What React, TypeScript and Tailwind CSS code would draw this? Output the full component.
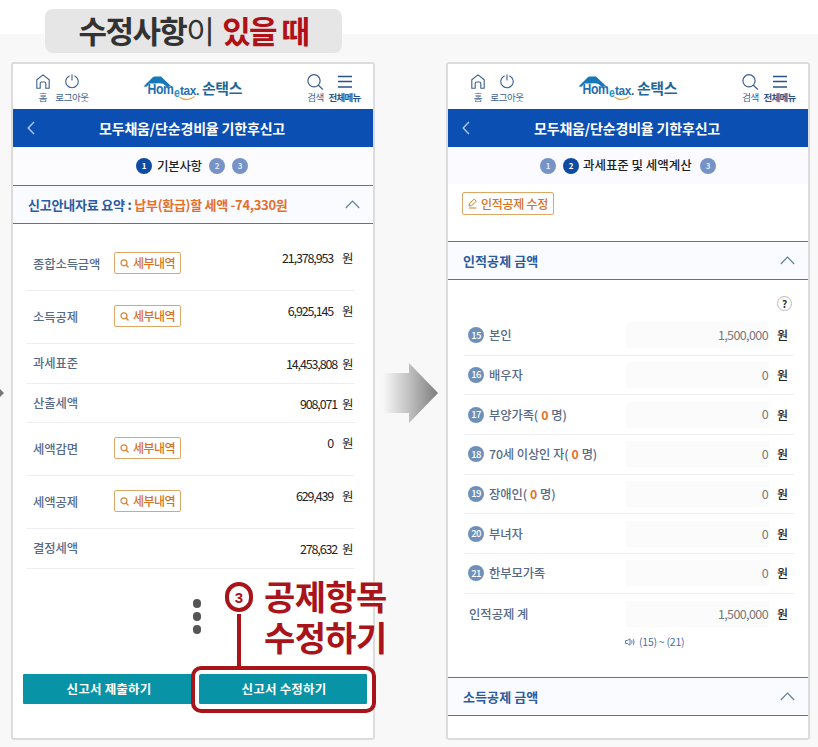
import { ReactNode } from 'react';
import clsx from 'clsx';

interface SummaryRow {
    label: string;
    value: string;
    detail?: boolean;
    height: string;
}

interface DeductionRow {
    no: number;
    label: string;
    count?: boolean;
}

const summaryRows: SummaryRow[] = [
    { label: '종합소득금액', value: '21,378,953', detail: true, height: 'h-[53px]' },
    { label: '소득공제', value: '6,925,145', detail: true, height: 'h-[53px]' },
    { label: '과세표준', value: '14,453,808', height: 'h-[40px]' },
    { label: '산출세액', value: '908,071', height: 'h-[39px]' },
    { label: '세액감면', value: '0', detail: true, height: 'h-[53px]' },
    { label: '세액공제', value: '629,439', detail: true, height: 'h-[53px]' },
    { label: '결정세액', value: '278,632', height: 'h-[40px]' },
];

const deductionRows: DeductionRow[] = [
    { no: 15, label: '본인' },
    { no: 16, label: '배우자' },
    { no: 17, label: '부양가족', count: true },
    { no: 18, label: '70세 이상인 자', count: true },
    { no: 19, label: '장애인', count: true },
    { no: 20, label: '부녀자' },
    { no: 21, label: '한부모가족' },
];

const Logo = () => (
    <svg width="102" height="30" viewBox="0 0 102 30" className="shrink-0">
        <path d="M0.5 12.5 L9.5 3.6 Q10.5 2.6 12 2.6 H18 L28.5 12.5 H23.5 L20 9.8 Q17 9 12.5 9.5 L6.5 9.5 L3.5 12.8 Z" fill="#1678b8" />
        <text x="4.5" y="20" fontSize="14" fontWeight="700" fill="#1f6fb0" textLength="26" lengthAdjust="spacingAndGlyphs" fontFamily="Liberation Sans, sans-serif">Hom</text>
        <text x="31" y="23" fontSize="12" fontWeight="700" fill="#1b96d2" textLength="5.5" lengthAdjust="spacingAndGlyphs" fontFamily="Liberation Sans, sans-serif">e</text>
        <text x="37" y="20.5" fontSize="13.5" fontWeight="700" fill="#1f6fb0" textLength="19" lengthAdjust="spacingAndGlyphs" fontFamily="Liberation Sans, sans-serif">tax.</text>
        <path d="M36.5 23 Q44 28.5 51.5 22.5" fill="none" stroke="#f2a64a" strokeWidth="1.2" />
        <text x="59" y="20" fontSize="15" fontWeight="700" fill="#1f6798" textLength="40" lengthAdjust="spacingAndGlyphs" fontFamily="'Noto Sans CJK KR', sans-serif">손택스</text>
    </svg>
);

const HomeIcon = () => (
    <svg width="14" height="15" viewBox="0 0 14 15" fill="none" stroke="#3d5f8f" strokeWidth="1.1">
        <path d="M0.8 5.8 L7 0.9 L13.2 5.8 V14.2 H9.8 V9.3 Q9.8 8 8.5 8 H5.5 Q4.2 8 4.2 9.3 V14.2 H0.8 Z" strokeLinejoin="round" />
    </svg>
);

const PowerIcon = () => (
    <svg width="14" height="15" viewBox="0 0 14 15" fill="none" stroke="#3d5f8f" strokeWidth="1.1" strokeLinecap="round">
        <path d="M7 0.7 V6 M4.3 2 A6.2 6.2 0 1 0 9.7 2" />
    </svg>
);

const SearchIcon = () => (
    <svg width="17" height="16" viewBox="0 0 17 16" fill="none" stroke="#3d5f8f" strokeWidth="1.2" strokeLinecap="round">
        <circle cx="7" cy="6.8" r="6.1" />
        <path d="M11.4 11.3 L15.6 15.2" />
    </svg>
);

const MenuIcon = () => (
    <svg width="14" height="13" viewBox="0 0 14 13" fill="none" stroke="#2b5288" strokeWidth="1.3">
        <path d="M0 1.5 H14 M0 6.5 H14 M0 12 H14" />
    </svg>
);

const ChevronUp = () => (
    <svg width="15" height="9" viewBox="0 0 15 9" fill="none" stroke="#5c7f95" strokeWidth="1.1">
        <path d="M0.8 8 L7.5 1 L14.2 8" />
    </svg>
);

const AppHeader = () => (
    <>
        <div className="flex h-[45px] shrink-0 text-[9.5px] leading-[12px] tracking-[-0.4px] text-[#3d5f8f]">
            <div className="flex w-[130px] gap-[4px] pl-[23px] pt-[10px]">
                <div className="flex w-[14px] flex-col items-center gap-[2px] whitespace-nowrap">
                    <HomeIcon />
                    <span>홈</span>
                </div>
                <div className="flex w-[36px] flex-col items-center gap-[2px] whitespace-nowrap">
                    <PowerIcon />
                    <span>로그아웃</span>
                </div>
            </div>
            <div className="w-[164px] pt-[10px]">
                <Logo />
            </div>
            <div className="flex gap-[4px] pt-[10px]">
                <div className="flex w-[17px] flex-col items-center gap-px whitespace-nowrap">
                    <SearchIcon />
                    <span>검색</span>
                </div>
                <div className="flex w-[33px] flex-col items-center gap-[3px] whitespace-nowrap pt-px font-bold tracking-[-0.8px] text-[#2b5288]">
                    <MenuIcon />
                    <span>전체메뉴</span>
                </div>
            </div>
        </div>
        <div className="flex h-[38px] shrink-0 items-center bg-[#0b4fb3] text-white">
            <svg width="8" height="14" viewBox="0 0 8 14" fill="none" stroke="#a9c6f2" strokeWidth="1.5" className="ml-[14px]">
                <path d="M7 1 L1.2 7 L7 13" />
            </svg>
            <h1 className="ml-[64px] whitespace-nowrap text-[14px] font-bold leading-none tracking-[-0.18px]">모두채움/단순경비율 기한후신고</h1>
        </div>
    </>
);

const Step = ({ no, active }: { no: number; active?: boolean }) => (
    <span className={clsx(
        'flex h-[16px] w-[16px] items-center justify-center rounded-full text-[8px] font-bold leading-none',
        active ? 'bg-[#0f4ba3] text-white' : 'bg-[#7793c6] text-[#dce8fa]'
    )}>
        {no}
    </span>
);

const SectionTitle = ({ children }: { children: ReactNode }) => (
    <div className="flex h-[39px] shrink-0 items-center justify-between border-y border-[#4b7ba5] bg-[#fafbff] pl-[15px] pr-[13px]">
        <h2 className="whitespace-nowrap text-[13px] font-bold leading-none tracking-[0.1px] text-[#2a5ba0]">{children}</h2>
        <ChevronUp />
    </div>
);

const DetailButton = () => (
    <button className="flex h-[22px] w-[67px] items-center justify-center gap-[4px] whitespace-nowrap rounded-[2px] border border-[#dfa765] text-[12px] font-medium leading-none tracking-[-0.6px] text-[#d6721f]">
        <svg width="9" height="9" viewBox="0 0 9 9" fill="none" stroke="#d6812f" strokeWidth="1.2">
            <circle cx="4" cy="3.8" r="3" />
            <path d="M6.1 6 L8.5 8.5" />
        </svg>
        세부내역
    </button>
);

const SummaryScreen = () => (
    <div className="flex h-[678px] w-[364px] flex-col rounded-[3px] border-2 border-[#dcdcdc] bg-white">
        <AppHeader />
        <div className="flex h-[38px] shrink-0 items-center bg-[#fcfcff] pl-[123px]">
            <Step no={1} active />
            <span className="ml-[5px] mr-[7px] w-[45px] whitespace-nowrap text-[12.5px] font-medium leading-none tracking-[-0.3px] text-[#222]">기본사항</span>
            <Step no={2} />
            <span className="w-[7px]" />
            <Step no={3} />
        </div>
        <SectionTitle>
            <span className="tracking-[-0.2px]">신고안내자료 요약 : </span>
            <span className="tracking-[-0.3px] text-[#e4702c]">납부(환급)할 세액 -74,330원</span>
        </SectionTitle>
        <div className="ml-[13px] mr-[18px] mt-[14px]">
            {summaryRows.map((row) => (
                <div key={row.label} className={clsx('flex border-b border-[#eeeeee] pl-[7px] pr-[3px] leading-none', row.height)}>
                    <span className={clsx('w-[81px] whitespace-nowrap text-[12.3px] font-medium tracking-[-0.1px] text-[#566a88]', row.detail ? 'pt-[20px]' : 'pt-[13px]')}>{row.label}</span>
                    <div className="w-[68px] pt-[14px]">{row.detail && <DetailButton />}</div>
                    <div className={clsx('flex flex-1 justify-end pt-[14px] text-[12.5px] text-[#222]', row.detail ? 'gap-[9px]' : 'gap-[5px]')}>
                        <span className="tracking-[-1.15px]">{row.value}</span>
                        <span className="w-[10px] whitespace-nowrap">원</span>
                    </div>
                </div>
            ))}
        </div>
        <div className="ml-[180px] mt-[30px] flex flex-col gap-[4px]">
            <span className="h-[9px] w-[8px] rounded-full bg-[#555]" />
            <span className="h-[9px] w-[8px] rounded-full bg-[#555]" />
            <span className="h-[9px] w-[8px] rounded-full bg-[#555]" />
        </div>
        <div className="mb-[34px] ml-[10px] mt-auto flex gap-[6px] text-[12.5px] font-bold leading-none tracking-[0.2px] text-white">
            <button className="h-[30px] w-[170px] rounded-[1px] bg-[#0993a6] pl-[2px]">신고서 제출하기</button>
            <button className="h-[30px] w-[168px] rounded-[1px] bg-[#0993a6] pl-[2px]">신고서 수정하기</button>
        </div>
    </div>
);

const AmountField = ({ value }: { value: string }) => (
    <div className="flex items-center leading-none">
        <span className="flex h-[26px] w-[143px] items-center justify-end bg-[#fbfbfb] pr-px text-[12.5px] tracking-[-0.6px] text-[#777]">{value}</span>
        <span className="ml-[8px] w-[11px] whitespace-nowrap text-[12px] font-medium text-[#222]">원</span>
    </div>
);

const DeductionScreen = () => (
    <div className="flex h-[678px] w-[364px] flex-col rounded-[3px] border-2 border-[#dcdcdc] bg-white">
        <AppHeader />
        <div className="flex h-[37px] shrink-0 items-center bg-[#fafaff] pl-[92px]">
            <Step no={1} />
            <span className="w-[7px]" />
            <Step no={2} active />
            <span className="ml-[4px] mr-[8px] w-[109px] whitespace-nowrap text-[12.5px] font-medium leading-none tracking-[-0.05px] text-[#222]">과세표준 및 세액계산</span>
            <Step no={3} />
        </div>
        <button className="ml-[14px] mt-[8px] flex h-[23px] w-[92px] shrink-0 items-center justify-center gap-[3px] whitespace-nowrap rounded-[2px] border border-[#dfa765] text-[12px] font-medium leading-none tracking-[-0.3px] text-[#d6721f]">
            <svg width="10" height="11" viewBox="0 0 10 11" fill="none" stroke="#d6812f" strokeWidth="1">
                <path d="M1 8 L1.6 5.6 L6.2 1 L8.4 3.2 L3.6 7.6 Z M1 10 H8.5" strokeLinejoin="round" />
            </svg>
            인적공제 수정
        </button>
        <div className="h-[26px] shrink-0" />
        <SectionTitle>인적공제 금액</SectionTitle>
        <div className="mt-[16px] flex shrink-0 justify-end pr-[16px]">
            <span className="flex h-[15px] w-[15px] items-center justify-center rounded-full border border-[#bbb] text-[10px] font-bold leading-none text-[#333]">?</span>
        </div>
        <div className="ml-[16px] mr-[14px] mt-[5px] shrink-0">
            {deductionRows.map((row) => (
                <div key={row.no} className="flex h-[39.7px] items-center justify-between border-b border-[#eeeef2] pl-[4px] pr-[6px]">
                    <div className="flex items-center whitespace-nowrap text-[12.3px] font-medium leading-none tracking-[-0.1px] text-[#566a88]">
                        <span className="mr-[5px] flex h-[16px] w-[16px] items-center justify-center rounded-full bg-[#6f90b8] text-[9.5px] tracking-[-0.6px] text-white">{row.no}</span>
                        {row.label}
                        {row.count && <>(<b className="mx-[3px] text-[#e4702c]">0</b>명)</>}
                    </div>
                    <AmountField value={row.no === 15 ? '1,500,000' : '0'} />
                </div>
            ))}
            <div className="flex h-[40px] items-center justify-between pl-[5px] pr-[6px]">
                <span className="text-[12.3px] font-medium leading-none text-[#566a88]">인적공제 계</span>
                <AmountField value="1,500,000" />
            </div>
        </div>
        <div className="mt-px flex items-center gap-[4px] pl-[177px] text-[10.5px] leading-[14px] tracking-[-0.25px] text-[#4a6fa5]">
            <svg width="10" height="8" viewBox="0 0 10 8" fill="none" stroke="#4a6fa5" strokeWidth="0.9">
                <path d="M0.6 2.5 H2.3 L5 0.8 V7.2 L2.3 5.5 H0.6 Z M6.6 2.3 Q7.6 4 6.6 5.7 M8.3 1.2 Q9.9 4 8.3 6.8" />
            </svg>
            (15) ~ (21)
        </div>
        <div className="mb-[22px] mt-auto">
            <SectionTitle>소득공제 금액</SectionTitle>
        </div>
    </div>
);

// red marker drawn on top of the first screen
const Callout = () => (
    <div className="absolute left-[191px] top-[577px] w-[200px] text-[#a81419]">
        <div className="absolute left-[34px] top-[5px] flex h-[30px] w-[28px] items-center justify-center rounded-full border-4 border-[#a81419] bg-white font-['Liberation_Sans',sans-serif] text-[15px] font-bold leading-none">3</div>
        <div className="absolute left-[46px] top-[37px] h-[53px] w-[4px] bg-[#a81419]" />
        <p className="absolute left-[73px] top-[-1px] whitespace-nowrap text-[34px] font-bold leading-[40.5px] tracking-[-0.6px] [text-shadow:0_0_2px_#fff,0_0_2px_#fff]">공제항목<br />수정하기</p>
        <div className="absolute left-0 top-[89px] h-[47px] w-[185px] rounded-[10px] border-4 border-[#a81419] shadow-[inset_0_0_0_4px_#fff]" />
    </div>
);

const App = () => {
    return (
        <div className="relative h-[747px] w-[818px] overflow-hidden bg-[linear-gradient(#fff_34px,#f8f8f8_34px)] font-['Noto_Sans_CJK_KR',sans-serif]">
            <div className="ml-[45px] flex h-[53px] items-end">
                <div className="flex h-[44px] w-[297px] items-center justify-center whitespace-nowrap rounded-[8px] bg-[#e6e6e6] pb-[3px] text-[31px] leading-none tracking-[-1.6px] text-[#333]">
                    <b>수정사항</b>이<b className="ml-[9px] text-[#b01116]">있을 때</b>
                </div>
            </div>
            <div className="mt-[9px] flex items-center">
                <div className="h-0 w-[11px] shrink-0">
                    <svg width="4" height="12" viewBox="0 0 4 12" className="-mt-[14px]">
                        <path d="M0 2 L4 6 L0 10 Z" fill="#777" />
                    </svg>
                </div>
                <SummaryScreen />
                <div className="flex w-[71px] shrink-0 pb-[17px] pl-[8px]">
                    <svg width="56" height="62" viewBox="0 0 56 62" className="shrink-0">
                        <defs>
                            <linearGradient id="arrow" x1="0" x2="1">
                                <stop offset="0" stopColor="#f8f8f8" />
                                <stop offset="0.5" stopColor="#bdbdbd" />
                                <stop offset="1" stopColor="#7d7d7d" />
                            </linearGradient>
                        </defs>
                        <path d="M0 11 H26 V1 L55 31 L26 61 V51 H0 Z" fill="url(#arrow)" />
                    </svg>
                </div>
                <DeductionScreen />
            </div>
            <Callout />
        </div>
    );
};

export default App;
